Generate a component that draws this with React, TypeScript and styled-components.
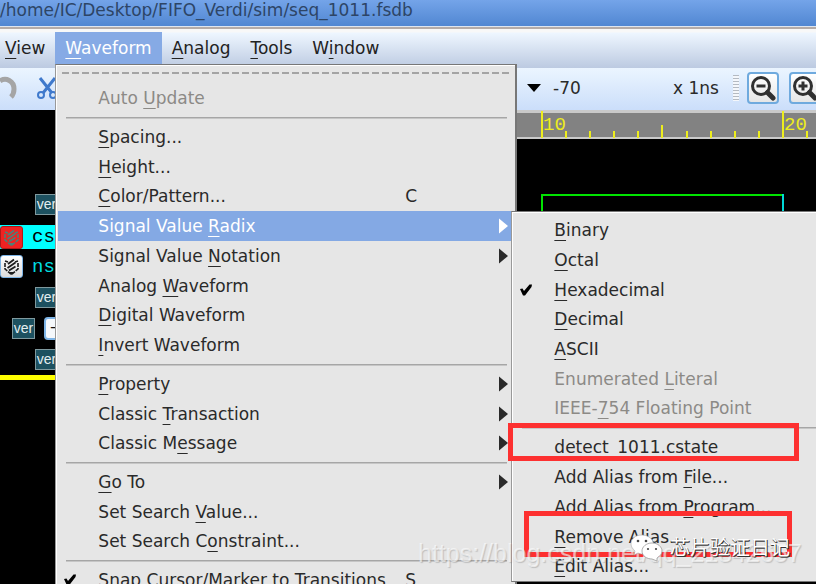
import React from "react";
import styled, { createGlobalStyle } from "styled-components";

const GlobalStyle = createGlobalStyle`
  * { box-sizing: border-box; }
  html, body { margin: 0; height: 100%; overflow: hidden; background: #000; }
  body { font-family: "DejaVu Sans", sans-serif; font-size: 17px; color: #2a2a2a; }
  button, input { font: inherit; color: inherit; }
  ul { list-style: none; margin: 0; padding: 0; }
`;

const Window = styled.div`
  position: relative;
  display: flex;
  flex-direction: column;
  height: 100vh;
  overflow: hidden;
`;

const TitleBar = styled.header`
  height: 26px;
  line-height: 20px;
  white-space: nowrap;
  color: #2d4566;
  background: linear-gradient(#74a4e9, #5187d2);
`;

const MenuBar = styled.nav`
  display: flex;
  align-items: flex-start;
  height: 42px;
  padding-top: 5px;
  border-top: 1px solid #dfe6f0;
  background: linear-gradient(#b5aca8 0 2px, #f8f8f8 2px 5px, #eef6ff 6px, #bccae1 100%);
`;

const MenuAnchor = styled.div`
  position: relative;
`;

const MenuButton = styled.button<{ $open?: boolean }>`
  display: block;
  height: 32px;
  padding: 0 10px;
  border: 0;
  white-space: nowrap;
  background: ${(p) => (p.$open ? "#86aae5" : "transparent")};
  color: ${(p) => (p.$open ? "#fff" : "#222")};
  &:first-child:not(:only-child) { padding-left: ${(p) => (p.$open ? 10 : 5)}px; }
`;

const Mnemonic = styled.u`
  text-decoration-thickness: 1px;
  text-underline-offset: 4px;
  text-decoration-skip-ink: none;
`;

const ToolBar = styled.div`
  display: flex;
  align-items: center;
  justify-content: space-between;
  height: 42px;
  padding-bottom: 2px;
  background: linear-gradient(#ebf5ff, #cbdefa);
`;

const ToolGroup = styled.div`
  display: flex;
  align-items: center;
  flex: none;
`;

const PlainTool = styled.button`
  display: flex;
  padding: 0;
  border: 0;
  background: none;
`;

const TimeField = styled.input`
  width: 120px;
  padding: 0;
  margin-left: 12px;
  border: 0;
  background: none;
  outline: none;
`;

const UnitLabel = styled.label`
  width: 60px;
  white-space: nowrap;
`;

const Grip = styled.span`
  width: 6px;
  height: 26px;
  margin-right: 8px;
  background: repeating-linear-gradient(#b4bac2 0 1px, #f4f7fb 1px 3px);
`;

const ZoomTool = styled.button`
  display: flex;
  align-items: center;
  justify-content: center;
  width: 32px;
  height: 32px;
  margin-right: 10px;
  padding: 0;
  border: 2px solid #6faade;
  border-radius: 4px;
  background: linear-gradient(#fff, #e6e6e6);
  &:last-child { margin-right: -5px; }
`;

const Workspace = styled.main`
  display: flex;
  flex: 1;
  min-height: 0;
`;

const SignalPane = styled.ul`
  width: 64px;
  flex: none;
  padding-top: 79px;
`;

const SignalRow = styled.li<{ $selected?: boolean; $indent?: number }>`
  display: flex;
  align-items: center;
  gap: 9px;
  height: ${(p) => (p.$selected ? 24 : 31)}px;
  margin: ${(p) => (p.$selected ? "5px 0 2px" : "0")};
  padding-left: ${(p) => p.$indent ?? 0}px;
  background: ${(p) => (p.$selected ? "#00ffff" : "transparent")};
  color: ${(p) => (p.$selected ? "#000" : "#00dce0")};
  font: 19px/22px "Liberation Mono", monospace;
  overflow: hidden;
`;

const VerTag = styled.span`
  flex: none;
  width: 23px;
  height: 21px;
  border: 1px solid #7f999e;
  background: #1d5160;
  color: #e4eef0;
  font: 14px/19px "Liberation Sans", sans-serif;
  text-align: center;
`;

const SignalBadge = styled.span<{ $active?: boolean }>`
  display: flex;
  flex: none;
  width: 23px;
  height: 23px;
  border: 1px solid ${(p) => (p.$active ? "#b01818" : "#7db4e6")};
  border-radius: 3px;
  background: ${(p) => (p.$active ? "#f02222" : "linear-gradient(#fff, #dcdcdc)")};
  color: ${(p) => (p.$active ? "#4f7f76" : "#1c1c1c")};
`;

const Collapse = styled.button`
  flex: none;
  width: 23px;
  height: 23px;
  padding: 0;
  border: 2px solid #7db4e6;
  border-radius: 4px;
  background: #f5f8fb;
  color: #111;
  line-height: 16px;
`;

const CursorBar = styled.li`
  height: 5px;
  background: #ffff00;
`;

const WavePane = styled.section`
  flex: 1;
  min-width: 0;
`;

const WaveDrawing = styled.svg`
  display: block;
  width: 100%;
  height: 100%;
  font: 19px "Liberation Mono", monospace;
`;

const MenuPanel = styled.div`
  position: absolute;
  z-index: 2;
  top: 100%;
  left: 0;
  width: 462px;
  padding: 7px 4px 6px 2px;
  border: 1px solid #777;
  border-left-color: #999;
  border-right: 2px solid #777;
  background: #e6e6e6;
  box-shadow: inset 1px 1px #fff;
`;

const TearOff = styled.div`
  height: 2px;
  margin: 0 0 9px 4px;
  background: repeating-linear-gradient(90deg, #a4a4a4 0 7px, #e6e6e6 7px 10px);
`;

const SubPanel = styled(MenuPanel)`
  z-index: 3;
  top: 0;
  left: 100%;
  width: 340px;
  padding: 3px 4px 0 2px;
`;

const MenuGroup = styled.ul<{ $height: number }>`
  display: flex;
  flex-direction: column;
  min-height: ${(p) => p.$height}px;
`;

const Separator = styled.hr`
  height: 2px;
  margin: 4px 4px 3px 8px;
  border: 0;
  background: linear-gradient(#a6a6a6 50%, #c6c6c6 50%);
`;

const MenuItem = styled.li`
  position: relative;
  display: flex;
  flex: 1;
`;

const ItemButton = styled.button<{ $active?: boolean }>`
  display: grid;
  grid-template-columns: 40px 1fr auto 12px;
  align-items: center;
  width: 100%;
  padding: 0;
  border: 0;
  text-align: left;
  white-space: nowrap;
  line-height: 22px;
  background: ${(p) => (p.$active ? "#84a9e4" : "transparent")};
  color: ${(p) => (p.$active ? "#fff" : "#2a2a2a")};
  &:disabled { color: #8c8a86; }
`;

const CheckCell = styled.span`
  display: flex;
  padding-left: 5px;
`;

const Shortcut = styled.kbd`
  width: 94px;
  font: inherit;
`;

const RedFrame = styled.div<{ $x: number; $y: number; $w: number; $h: number }>`
  position: absolute;
  z-index: 4;
  left: ${(p) => p.$x}px;
  top: ${(p) => p.$y}px;
  width: ${(p) => p.$w}px;
  height: ${(p) => p.$h}px;
  border: 5px solid #fd3030;
  pointer-events: none;
`;

const UrlMark = styled.div`
  position: absolute;
  z-index: 5;
  left: 418px;
  top: 538px;
  font: 25px/30px "Liberation Sans", sans-serif;
  color: rgba(255, 255, 255, 0.6);
  text-shadow: 1px 1px 1px rgba(120, 120, 120, 0.35);
  white-space: nowrap;
  pointer-events: none;
`;

const AccountMark = styled.div`
  position: absolute;
  z-index: 6;
  left: 630px;
  top: 532px;
  display: flex;
  gap: 7px;
  font: 20px/30px "Noto Sans CJK SC", sans-serif;
  color: #fff;
  text-shadow: 1px 1px #333, 0 1px #555;
  white-space: nowrap;
  pointer-events: none;
`;

function Hot({ text }: { text: string }) {
  const at = text.indexOf("&");
  if (at < 0) return <span>{text}</span>;
  return (
    <span>
      {text.slice(0, at)}
      <Mnemonic>{text[at + 1]}</Mnemonic>
      {text.slice(at + 2)}
    </span>
  );
}

function Arrow() {
  return (
    <svg width="9" height="16" viewBox="0 0 9 16" aria-hidden="true">
      <path d="M0 0.5L9 8L0 15.5Z" fill="currentColor" />
    </svg>
  );
}

function Check() {
  return (
    <svg width="14" height="14" viewBox="0 0 14 14" aria-hidden="true">
      <path d="M1 6L3.5 5.5L5 8L10.5 1.5L13 1.5L12.5 4L6 12.5H4Z" fill="#000" />
    </svg>
  );
}

function Magnifier({ plus }: { plus?: boolean }) {
  return (
    <svg width="26" height="26" viewBox="0 0 26 26" fill="none" stroke="#303030" aria-hidden="true">
      <circle cx="11" cy="11" r="8.5" strokeWidth="3" />
      <path d="M17.5 17.5L23 23" strokeWidth="5" strokeLinecap="round" />
      <path d={plus ? "M6.5 11H15.5M11 6.5V15.5" : "M6.5 11H15.5"} strokeWidth="3" />
    </svg>
  );
}

function BadgeGlyph() {
  return (
    <svg width="21" height="21" viewBox="0 0 21 21" fill="none" stroke="currentColor" aria-hidden="true">
      <path d="M4 5L7 6M17 5L14 6M4 7V13L10.5 18.5L17 13V7" strokeWidth="1.6" strokeDasharray="4 1" />
      <path d="M7 8L13 3.5M6.5 12L14.5 6.5M8 14.5L14.5 10.5" strokeWidth="1.8" />
      <path d="M8 16H13L10.5 19Z" fill="currentColor" stroke="none" />
    </svg>
  );
}

type Entry = {
  label: string;
  disabled?: boolean;
  checked?: boolean;
  shortcut?: string;
  children?: boolean;
  open?: boolean;
};

type Group = { height: number; items: Entry[] };

const waveformGroups: Group[] = [
  { height: 30, items: [{ label: "Auto &Update", disabled: true }] },
  {
    height: 238,
    items: [
      { label: "&Spacing..." },
      { label: "&Height..." },
      { label: "&Color/Pattern...", shortcut: "C" },
      { label: "Signal Value &Radix", children: true, open: true },
      { label: "Signal Value &Notation", children: true },
      { label: "Analog &Waveform" },
      { label: "&Digital Waveform" },
      { label: "&Invert Waveform" },
    ],
  },
  {
    height: 89,
    items: [
      { label: "&Property", children: true },
      { label: "Classic &Transaction", children: true },
      { label: "Classic M&essage", children: true },
    ],
  },
  {
    height: 89,
    items: [
      { label: "&Go To", children: true },
      { label: "Set Search &Value..." },
      { label: "Set Search C&onstraint..." },
    ],
  },
  { height: 30, items: [{ label: "Snap Cursor/Marker to Transitions", shortcut: "S", checked: true }] },
];

const radixGroups: Group[] = [
  {
    height: 208,
    items: [
      { label: "&Binary" },
      { label: "&Octal" },
      { label: "&Hexadecimal", checked: true },
      { label: "&Decimal" },
      { label: "&ASCII" },
      { label: "Enumerated &Literal", disabled: true },
      { label: "IEEE-&754 Floating Point", disabled: true },
    ],
  },
  {
    height: 149,
    items: [
      { label: "detect_1011.cstate" },
      { label: "Add Alias from &File..." },
      { label: "Add Alias from &Program..." },
      { label: "&Remove Alias..." },
      { label: "&Edit Alias..." },
    ],
  },
];

function Groups({ groups }: { groups: Group[] }) {
  return (
    <>
      {groups.map((group, i) => (
        <React.Fragment key={i}>
          {i > 0 && <Separator />}
          <MenuGroup $height={group.height}>
            {group.items.map((item) => (
              <MenuItem key={item.label}>
                <ItemButton $active={item.open} disabled={item.disabled}>
                  <CheckCell>{item.checked && <Check />}</CheckCell>
                  <Hot text={item.label} />
                  {item.shortcut ? <Shortcut>{item.shortcut}</Shortcut> : <span />}
                  {item.children ? <Arrow /> : <span />}
                </ItemButton>
                {item.open && (
                  <SubPanel>
                    <Groups groups={radixGroups} />
                  </SubPanel>
                )}
              </MenuItem>
            ))}
          </MenuGroup>
        </React.Fragment>
      ))}
    </>
  );
}

const tickXs = [25, 49, 73, 97, 121, 146, 170, 194, 218, 266];

export default function App() {
  return (
    <Window>
      <GlobalStyle />
      <TitleBar>/home/IC/Desktop/FIFO_Verdi/sim/seq_1011.fsdb</TitleBar>
      <MenuBar>
        <MenuButton><Hot text="&View" /></MenuButton>
        <MenuAnchor>
          <MenuButton $open><Hot text="&Waveform" /></MenuButton>
          <MenuPanel>
            <TearOff />
            <Groups groups={waveformGroups} />
          </MenuPanel>
        </MenuAnchor>
        <MenuButton><Hot text="&Analog" /></MenuButton>
        <MenuButton><Hot text="&Tools" /></MenuButton>
        <MenuButton><Hot text="W&indow" /></MenuButton>
      </MenuBar>
      <ToolBar>
        <ToolGroup>
          <PlainTool aria-label="Redo">
            <svg width="35" height="30" viewBox="0 0 35 30" fill="none">
              <path d="M0 8C6 4 14 8 14 16C14 19 13 22 11 24" stroke="#a5a5a5" strokeWidth="5" />
            </svg>
          </PlainTool>
          <PlainTool aria-label="Cut">
            <svg width="24" height="26" viewBox="0 0 24 26" fill="none" stroke="#3f79cc">
              <path d="M5 3L17 18M20 3L8 18" strokeWidth="3" />
              <circle cx="6" cy="20" r="3" strokeWidth="2" />
              <circle cx="18" cy="20" r="3" strokeWidth="2" />
            </svg>
          </PlainTool>
        </ToolGroup>
        <ToolGroup>
          <svg width="14" height="8" viewBox="0 0 14 8" aria-hidden="true">
            <path d="M0 0H14L7 8Z" fill="#000" />
          </svg>
          <TimeField id="time" defaultValue="-70" />
          <UnitLabel htmlFor="time">x 1ns</UnitLabel>
          <Grip />
          <ZoomTool aria-label="Zoom out"><Magnifier /></ZoomTool>
          <ZoomTool aria-label="Zoom in"><Magnifier plus /></ZoomTool>
        </ToolGroup>
      </ToolBar>
      <Workspace>
        <SignalPane>
          <SignalRow $indent={35}><VerTag>ver</VerTag></SignalRow>
          <SignalRow $selected><SignalBadge $active><BadgeGlyph /></SignalBadge>cs</SignalRow>
          <SignalRow><SignalBadge><BadgeGlyph /></SignalBadge>ns</SignalRow>
          <SignalRow $indent={35}><VerTag>ver</VerTag></SignalRow>
          <SignalRow $indent={12}><VerTag>ver</VerTag><Collapse aria-label="Collapse">−</Collapse></SignalRow>
          <SignalRow $indent={35}><VerTag>ver</VerTag></SignalRow>
          <CursorBar />
        </SignalPane>
        <WavePane>
          <WaveDrawing>
            <rect width="100%" height="29" fill="#c9c9c9" />
            <rect y="3" width="100%" height="24" fill="#828282" />
            <svg x="477" overflow="visible">
              <g fill="#eded1e">
                <rect x="0" y="1" width="2" height="27" />
                <rect x="241" y="1" width="2" height="27" />
                {tickXs.map((x) => (
                  <rect key={x} x={x - 1} y={x === 121 ? 15 : 21} width="2" height={x === 121 ? 13 : 7} />
                ))}
                <text x="2" y="20">10</text>
                <text x="243" y="20">20</text>
              </g>
              <path d="M1 120V85H242" fill="none" stroke="#00e400" strokeWidth="2" />
              <path d="M242 84V120" stroke="#00d8d8" strokeWidth="2" />
            </svg>
          </WaveDrawing>
        </WavePane>
      </Workspace>
      <RedFrame $x={508} $y={423} $w={291} $h={38} />
      <RedFrame $x={524} $y={511} $w={268} $h={46} />
      <UrlMark>https://blog.csdn.net/qq_21842657</UrlMark>
      <AccountMark>
        <svg width="33" height="30" viewBox="0 0 33 30" aria-hidden="true">
          <path d="M12 3C5 3 1 7 1 12C1 15 3 17 5 19L4 23L8 21C10 22 12 22 14 22C23 22 25 16 23 10C22 6 17 3 12 3Z" fill="#fff" stroke="#aaa" strokeWidth=".6" />
          <path d="M22 11C16 11 12 15 12 19C12 24 17 27 22 27L27 29L27 26C30 24 32 22 32 19C32 15 28 11 22 11Z" fill="#fff" stroke="#999" strokeWidth=".8" />
          <g fill="#444">
            <circle cx="8" cy="9" r="1.3" /><circle cx="16" cy="9" r="1.3" />
            <circle cx="18" cy="17" r="1.1" /><circle cx="26" cy="17" r="1.1" />
          </g>
        </svg>
        芯片验证日记
      </AccountMark>
    </Window>
  );
}
